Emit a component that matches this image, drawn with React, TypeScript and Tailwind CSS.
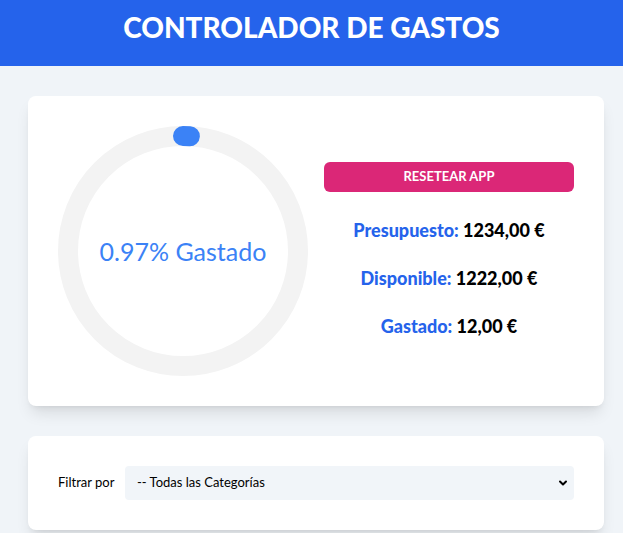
import { ChevronDown } from "lucide-react";

const font = { fontFamily: '"Lato", "Open Sans", sans-serif' };

function Progress({ pct }: { pct: number }) {
    const r = 46;
    const c = 2 * Math.PI * r;
    const len = (c * pct) / 100;
    return (
        <svg viewBox="0 0 100 100" className="w-[250px] h-[250px]">
            <circle cx="50" cy="50" r={r} fill="none" stroke="#f3f3f3" strokeWidth="8" />
            <circle
                cx="50"
                cy="50"
                r={r}
                fill="none"
                stroke="#3b82f6"
                strokeWidth="8"
                strokeLinecap="round"
                strokeDasharray={`${len} ${c}`}
                transform="rotate(-90 50 50)"
            />
            <text
                x="50"
                y="50"
                textAnchor="middle"
                dominantBaseline="central"
                fill="#3b82f6"
                fontSize="10"
            >
                {pct}% Gastado
            </text>
        </svg>
    );
}

export default function App() {
    return (
        <div className="min-h-screen bg-[#f0f4f8] pb-8" style={font}>
            <header className="bg-[#2563eb] h-[66px] flex justify-center pt-[13px]">
                <h1 className="text-white text-[28px] leading-none font-black uppercase">
                    Controlador de Gastos
                </h1>
            </header>

            <div className="pl-[28px] pr-[19px] mt-[30px] flex flex-col gap-[30px]">
                <div className="bg-white rounded-lg shadow-lg p-[30px] grid grid-cols-2 gap-4 items-center">
                    <div className="flex justify-center">
                        <Progress pct={0.97} />
                    </div>
                    <div className="flex flex-col items-center">
                        <button
                            type="button"
                            className="w-full h-[30px] rounded-md bg-[#db2777] text-white text-[13px] font-bold uppercase mb-6"
                        >
                            Resetear App
                        </button>
                        <div className="flex flex-col gap-5 text-lg font-black text-center">
                            <p>
                                <span className="text-[#2563eb]">Presupuesto: </span>
                                <span className="text-black">1234,00 €</span>
                            </p>
                            <p>
                                <span className="text-[#2563eb]">Disponible: </span>
                                <span className="text-black">1222,00 €</span>
                            </p>
                            <p>
                                <span className="text-[#2563eb]">Gastado: </span>
                                <span className="text-black">12,00 €</span>
                            </p>
                        </div>
                    </div>
                </div>

                <div className="bg-white rounded-lg shadow-lg p-[30px] flex items-center gap-[15px]">
                    <label className="text-[13px] text-black whitespace-nowrap shrink-0 w-[52px]">Filtrar por</label>
                    <div className="relative flex-1">
                        <select className="appearance-none w-full h-[34px] rounded bg-[#f1f5f9] pl-[12px] text-[13px] text-black outline-none">
                            <option>-- Todas las Categorías</option>
                        </select>
                        <ChevronDown
                            className="absolute right-[5px] top-1/2 -translate-y-1/2 w-[12px] h-[12px] text-black pointer-events-none"
                            strokeWidth={4}
                        />
                    </div>
                </div>
            </div>
        </div>
    );
}
